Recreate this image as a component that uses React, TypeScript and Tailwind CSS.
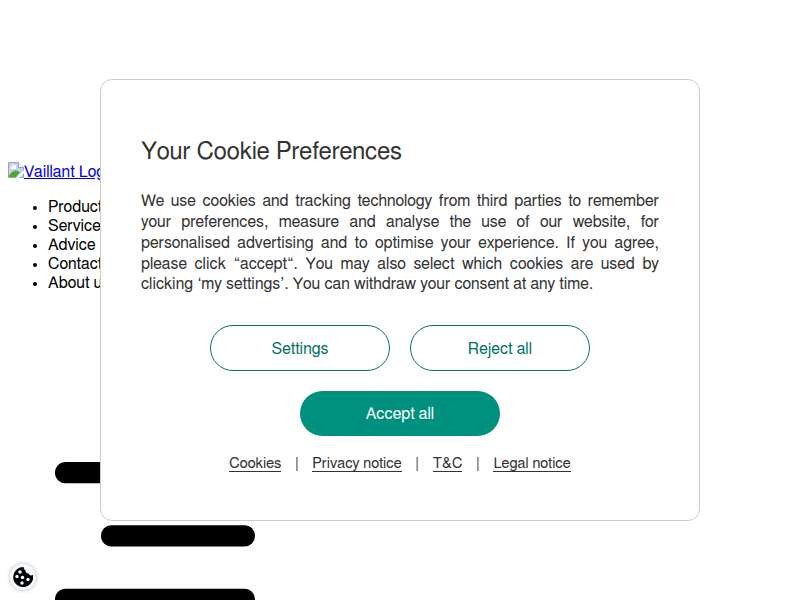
import type { ReactNode } from 'react'

const navItems = ['Products', 'Services', 'Advice', 'Contact', 'About us']
const legalLinks = ['Cookies', 'Privacy notice', 'T&C', 'Legal notice']

function BrokenImage() {
  return (
    <svg width="16" height="16" viewBox="0 0 16 16" className="shrink-0">
      <path d="M.5.5h10l5 5v10H.5z" fill="#c3d5f5" stroke="#a3a3a3" />
      <path d="M3 7a1.5 1.5 0 0 1 1-2.5 2 2 0 0 1 4 1V7z" fill="#fff" />
      <path d="M1 14c1-3 4-5.5 7-5.5 2 0 3 1 4 2L8 15H1z" fill="#50a834" />
      <path d="M8 16l8-8v3l-5 5z" fill="#fff" />
      <path d="M10.5.5v5h5" fill="#fff" stroke="#a3a3a3" />
    </svg>
  )
}

function CookieIcon() {
  return (
    <svg width="20" height="20" viewBox="0 0 20 20">
      <path d="M10.5 0a4 4 0 0 0 2 3.5 3 3 0 0 0 3 3A3.5 3.5 0 0 0 20 8 10 10 0 1 1 10.5 0z" />
      <g fill="#f5faff">
        <circle cx="7" cy="5" r="1.8" />
        <circle cx="4" cy="9.5" r="1.7" />
        <circle cx="9.5" cy="10.5" r="1.8" />
        <circle cx="15" cy="12.5" r="1.7" />
        <circle cx="9" cy="16" r="1.7" />
      </g>
    </svg>
  )
}

function PageBehind() {
  return (
    <div className="pt-[162px]">
      <a href="#" className="flex h-[19px] pl-2 leading-[21px] whitespace-nowrap text-[#0000ee] underline">
        <BrokenImage />
        Vaillant Logo
      </a>
      <ul className="mt-[17px] list-disc pl-12 leading-[19px]">
        {navItems.map((item) => (
          <li key={item}>{item}</li>
        ))}
      </ul>
      <svg width="300" height="307" viewBox="0 0 300 307" className="block">
        <rect x="55" y="169" width="200" height="21.3" rx="10.6" />
        <rect x="101" y="232.2" width="154" height="21.3" rx="10.6" />
        <rect x="55" y="295.7" width="200" height="21.3" rx="10.6" />
      </svg>
    </div>
  )
}

function OutlineButton({ children }: { children: ReactNode }) {
  return (
    <button className="h-[46px] w-[180px] rounded-full border border-[#00745f] pt-0.5 text-[#00745f]">
      {children}
    </button>
  )
}

function CookieDialog() {
  return (
    <div className="h-[441.6px] w-[600px] rounded-xl border border-[#ccc] bg-white px-10 pt-[57px] text-[#333]">
      <h2 className="text-2xl leading-[31px] tracking-[0.12px]">Your Cookie Preferences</h2>
      <p className="mt-[23px] text-justify leading-[20.8px]">
        We use cookies and tracking technology from third parties to remember your preferences, measure and
        analyse the use of our website, for personalised advertising and to optimise your experience. If you
        agree, please click “accept“. You may also select which cookies are used by clicking ‘my settings’. You
        can withdraw your consent at any time.
      </p>
      <div className="mt-[30px] flex flex-wrap justify-center gap-5">
        <OutlineButton>Settings</OutlineButton>
        <OutlineButton>Reject all</OutlineButton>
        <button className="h-[45px] w-[200px] rounded-full bg-[#00917e] text-white">Accept all</button>
      </div>
      <div className="mt-[18px] flex justify-center text-[14.7px] leading-[19px]">
        {legalLinks.map((label, i) => (
          <span key={label} className="flex">
            {i > 0 && <span className="w-[31px] text-center">|</span>}
            <a href="#" className="h-[18px] border-b border-[#333]">{label}</a>
          </span>
        ))}
      </div>
    </div>
  )
}

export default function App() {
  return (
    <div className="relative h-[600px] w-[800px] overflow-hidden bg-white font-[FreeSans,'Liberation_Sans',sans-serif] text-base tracking-[0.08px] text-black">
      <PageBehind />
      <div className="absolute inset-0 flex items-center justify-center">
        <CookieDialog />
      </div>
      <button className="absolute top-[564px] left-[10px] flex size-[26px] items-center justify-center rounded-full bg-[#f5faff] shadow-[0_0_4px_rgba(0,0,0,0.3)]">
        <CookieIcon />
      </button>
    </div>
  )
}
